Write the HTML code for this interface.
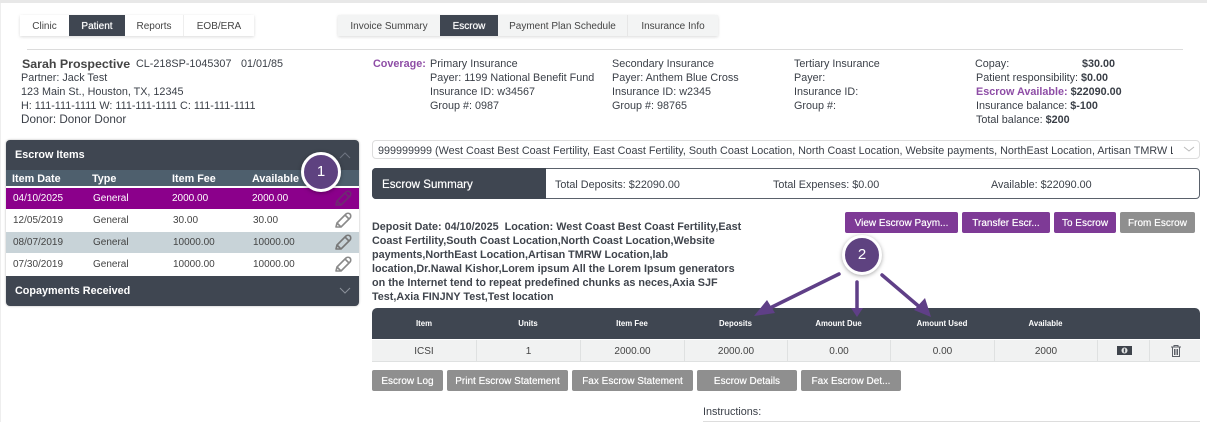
<!DOCTYPE html>
<html><head><meta charset="utf-8"><style>
html,body{margin:0;padding:0;background:#fff}
#p{position:relative;width:1207px;height:422px;overflow:hidden;background:#fff;font-family:"Liberation Sans",sans-serif;font-size:10.8px;color:#3a3f47;filter:blur(.35px)}
#p div{position:absolute;box-sizing:border-box;white-space:nowrap}
.t{line-height:16px}
.tab{top:15px;height:21px;line-height:23px;text-align:center;font-size:10px;color:#444}
.on{background:#3f4651;color:#fff;text-shadow:0 0 .6px #fff}
.rowc{font-size:10px;line-height:21px;height:21px;color:#444}
.hc{top:170px;height:16px;line-height:18px;font-size:10.8px;font-weight:bold;color:#fff}
.btn{height:21px;line-height:23px;text-align:center;color:#fff;font-size:10px;border-radius:2px;background:#8f8f8f;text-shadow:0 0 .5px #fff}
.pu{background:#7e3a96;top:212px}
.g{top:370px}
.th{top:308px;height:31px;line-height:31px;font-size:7.8px;font-weight:bold;color:#fff;text-align:center}
.td{top:340px;height:21px;line-height:23px;font-size:10px;text-align:center;color:#444;border-right:1px solid #dfe1e1}
.badge{width:40px;height:40px;border-radius:50%;background:#5e4280;border:3px solid #fff;box-shadow:0 1px 4px rgba(0,0,0,.35);color:#fff;text-align:center;line-height:34px;font-size:15px}
</style></head><body><div id="p">
<div style="left:0;top:0;width:1207px;height:3px;background:#e8e8e8"></div>
<div style="left:0;top:3px;width:1px;height:419px;background:#eee"></div>

<div style="left:20px;top:15px;width:234px;height:21px;background:#fff;box-shadow:0 1px 3px rgba(0,0,0,.15)"></div>
<div class="tab" style="left:20px;width:49px">Clinic</div>
<div class="tab on" style="left:69px;width:56px">Patient</div>
<div class="tab" style="left:125px;width:59px;border-right:1px solid #eee">Reports</div>
<div class="tab" style="left:184px;width:70px">EOB/ERA</div>

<div style="left:338px;top:15px;width:380px;height:21px;background:#f3f4f4;box-shadow:0 1px 3px rgba(0,0,0,.15)"></div>
<div class="tab" style="left:338px;width:102px">Invoice Summary</div>
<div class="tab on" style="left:440px;width:58px">Escrow</div>
<div class="tab" style="left:498px;width:130px;border-right:1px solid #e6e6e6">Payment Plan Schedule</div>
<div class="tab" style="left:628px;width:90px">Insurance Info</div>

<div style="left:27px;top:49px;width:1156px;height:1px;background:#dcdcdc"></div>

<div class="t" style="left:22px;top:56px;font-size:12.4px;font-weight:bold;color:#444">Sarah Prospective</div>
<div class="t" style="left:136px;top:56px">CL-218SP-1045307</div>
<div class="t" style="left:241px;top:56px">01/01/85</div>
<div class="t" style="left:21px;top:70px">Partner: Jack Test</div>
<div class="t" style="left:21px;top:84px">123 Main St., Houston, TX, 12345</div>
<div class="t" style="left:21px;top:98px">H: 111-111-1111 W: 111-111-1111 C: 111-111-1111</div>
<div class="t" style="left:21px;top:112px;font-size:11.7px">Donor: Donor Donor</div>

<div class="t" style="left:373px;top:56px;font-weight:bold;color:#8e4da6">Coverage:</div>
<div class="t" style="left:430px;top:56px">Primary Insurance</div>
<div class="t" style="left:430px;top:70px">Payer: 1199 National Benefit Fund</div>
<div class="t" style="left:430px;top:84px">Insurance ID: w34567</div>
<div class="t" style="left:430px;top:98px">Group #: 0987</div>

<div class="t" style="left:612px;top:56px">Secondary Insurance</div>
<div class="t" style="left:612px;top:70px">Payer: Anthem Blue Cross</div>
<div class="t" style="left:612px;top:84px">Insurance ID: w2345</div>
<div class="t" style="left:612px;top:98px">Group #: 98765</div>

<div class="t" style="left:794px;top:56px">Tertiary Insurance</div>
<div class="t" style="left:794px;top:70px">Payer:</div>
<div class="t" style="left:794px;top:84px">Insurance ID:</div>
<div class="t" style="left:794px;top:98px">Group #:</div>

<div class="t" style="left:975px;top:56px">Copay:</div>
<div class="t" style="left:1082px;top:56px;font-weight:bold">$30.00</div>
<div class="t" style="left:976px;top:70px">Patient responsibility: <b>$0.00</b></div>
<div class="t" style="left:976px;top:84px"><b style="color:#8e4da6">Escrow Available:</b> <b>$22090.00</b></div>
<div class="t" style="left:976px;top:98px">Insurance balance: <b>$-100</b></div>
<div class="t" style="left:976px;top:112px">Total balance: <b>$200</b></div>

<!-- left panel -->
<div style="left:6px;top:140px;width:353px;height:166px;background:#3f4651;border-radius:4px;box-shadow:0 0 2px rgba(0,0,0,.3)"></div>
<div style="left:15px;top:148px;line-height:15px;font-weight:bold;color:#fff">Escrow Items</div>
<div style="left:6px;top:170px;width:353px;height:16px;background:#4e5f6d"></div>
<div class="hc" style="left:12px">Item Date</div>
<div class="hc" style="left:92px">Type</div>
<div class="hc" style="left:172px">Item Fee</div>
<div class="hc" style="left:252px">Available</div>
<div style="left:6px;top:186px;width:353px;height:90px;background:#fff"></div>
<div style="left:6px;top:188px;width:353px;height:21px;background:#8b008b"></div>
<div style="left:6px;top:232px;width:353px;height:21px;background:#c8d3d8"></div>

<div class="rowc" style="left:13px;top:188px;color:#fff">04/10/2025</div><div class="rowc" style="left:93px;top:188px;color:#fff">General</div><div class="rowc" style="left:172px;top:188px;color:#fff">2000.00</div><div class="rowc" style="left:252px;top:188px;color:#fff">2000.00</div>
<div class="rowc" style="left:13px;top:210px">12/05/2019</div><div class="rowc" style="left:93px;top:210px">General</div><div class="rowc" style="left:173px;top:210px">30.00</div><div class="rowc" style="left:253px;top:210px">30.00</div>
<div class="rowc" style="left:13px;top:232px">08/07/2019</div><div class="rowc" style="left:93px;top:232px">General</div><div class="rowc" style="left:173px;top:232px">10000.00</div><div class="rowc" style="left:253px;top:232px">10000.00</div>
<div class="rowc" style="left:13px;top:254px">07/30/2019</div><div class="rowc" style="left:93px;top:254px">General</div><div class="rowc" style="left:173px;top:254px">10000.00</div><div class="rowc" style="left:253px;top:254px">10000.00</div>

<svg style="position:absolute;left:0;top:0" width="1207" height="422" fill="none">
<g stroke-width="1.6" stroke-linejoin="round">
<path d="M336 205l1-4 9-9c1-1 3-1 4 0s1 3 0 4l-9 9z M345 193l4 4 M337 201l4 4" stroke="#6f2a72"/>
<path d="M336 227l1-4 9-9c1-1 3-1 4 0s1 3 0 4l-9 9z M345 215l4 4 M337 223l4 4" stroke="#8a8a8a"/>
<path d="M336 249l1-4 9-9c1-1 3-1 4 0s1 3 0 4l-9 9z M345 237l4 4 M337 245l4 4" stroke="#777"/>
<path d="M336 271l1-4 9-9c1-1 3-1 4 0s1 3 0 4l-9 9z M345 259l4 4 M337 267l4 4" stroke="#8a8a8a"/>
</g>
<path d="M340 158l5-5 5 5" stroke="#6d7480" stroke-width="1"/>
<path d="M340 288l5 5 5-5" stroke="#8b919a" stroke-width="1"/>
</svg>
<div style="left:15px;top:284px;line-height:15px;font-weight:bold;color:#fff">Copayments Received</div>

<!-- select -->
<div style="left:372px;top:140px;width:828px;height:19px;border:1px solid #ddd;border-radius:4px;background:#fff"></div>
<div style="left:378px;top:144px;width:795px;line-height:14px;overflow:hidden">999999999 (West Coast Best Coast Fertility, East Coast Fertility, South Coast Location, North Coast Location, Website payments, NorthEast Location, Artisan TMRW Location, lab location</div>
<svg style="position:absolute;left:1183px;top:146px" width="12" height="8" fill="none"><path d="M1 1l5 4 5-4" stroke="#bbb"/></svg>

<!-- summary -->
<div style="left:372px;top:168px;width:828px;height:31px;border:1px solid #5a616b;border-radius:4px;background:#fff"></div>
<div style="left:372px;top:168px;width:174px;height:31px;background:#3f4651;border-radius:4px 0 0 4px;color:#fff;font-size:11.6px;line-height:33px;padding-left:10px;text-shadow:0 0 .5px #fff">Escrow Summary</div>
<div class="t" style="left:555px;top:177px">Total Deposits: $22090.00</div>
<div class="t" style="left:773px;top:177px">Total Expenses: $0.00</div>
<div class="t" style="left:991px;top:177px">Available: $22090.00</div>

<!-- deposit -->
<div style="left:372px;top:220px;line-height:14px;font-weight:bold;color:#3f444c">Deposit Date: 04/10/2025&nbsp; Location: West Coast Best Coast Fertility,East<br>Coast Fertility,South Coast Location,North Coast Location,Website<br>payments,NorthEast Location,Artisan TMRW Location,lab<br>location,Dr.Nawal Kishor,Lorem ipsum All the Lorem Ipsum generators<br>on the Internet tend to repeat predefined chunks as neces,Axia SJF<br>Test,Axia FINJNY Test,Test location</div>

<div class="btn pu" style="left:845px;width:113px">View Escrow Paym...</div>
<div class="btn pu" style="left:962px;width:88px">Transfer Escr...</div>
<div class="btn pu" style="left:1054px;width:62px">To Escrow</div>
<div class="btn" style="left:1120px;top:212px;width:75px">From Escrow</div>

<!-- table -->
<div style="left:372px;top:308px;width:828px;height:31px;background:#3f4651;border-radius:5px 5px 0 0"></div>
<div style="left:372px;top:340px;width:828px;height:22px;background:#f1f2f2;border-bottom:1px solid #dfe1e1"></div>
<div class="th" style="left:372px;width:104px">Item</div>
<div class="th" style="left:476px;width:104px">Units</div>
<div class="th" style="left:580px;width:104px">Item Fee</div>
<div class="th" style="left:684px;width:103px">Deposits</div>
<div class="th" style="left:787px;width:103px">Amount Due</div>
<div class="th" style="left:890px;width:104px">Amount Used</div>
<div class="th" style="left:994px;width:103px">Available</div>
<div class="td" style="left:372px;width:105px">ICSI</div>
<div class="td" style="left:477px;width:104px">1</div>
<div class="td" style="left:581px;width:104px">2000.00</div>
<div class="td" style="left:685px;width:103px">2000.00</div>
<div class="td" style="left:788px;width:103px">0.00</div>
<div class="td" style="left:891px;width:104px">0.00</div>
<div class="td" style="left:995px;width:103px">2000</div>
<div class="td" style="left:1098px;width:52px"></div>
<svg style="position:absolute;left:1117px;top:346px" width="15" height="10"><rect x="0" y="0" width="15" height="9" fill="#3f444c"/><circle cx="7.500" cy="4.500" r="3" fill="#e4e6e6"/><rect x="6.800" y="2.500" width="1.400" height="4" fill="#3f444c"/></svg>
<svg style="position:absolute;left:1170px;top:344px" width="12" height="14" fill="none" stroke="#5a5f66"><path d="M1 3h10M4 3V1.500h4V3M2.500 3.500v9h7v-9M4.500 5v6M6 5v6M7.500 5v6"/></svg>

<div class="btn g" style="left:372px;width:71px">Escrow Log</div>
<div class="btn g" style="left:447px;width:121px">Print Escrow Statement</div>
<div class="btn g" style="left:572px;width:121px">Fax Escrow Statement</div>
<div class="btn g" style="left:697px;width:100px">Escrow Details</div>
<div class="btn g" style="left:801px;width:100px">Fax Escrow Det...</div>

<div class="t" style="left:703px;top:404px">Instructions:</div>
<div style="left:703px;top:421px;width:497px;height:1px;background:#ddd"></div>

<!-- arrows -->
<svg style="position:absolute;left:0;top:0" width="1207" height="422" fill="none">
<g stroke="#5f3f87" stroke-width="3.500" stroke-linecap="round"><path d="M839 274L772 307"/><path d="M857 282V309"/><path d="M882 275L922 309"/></g>
<g fill="#5f3f87"><path d="M754 316L767 300 775 313z"/><path d="M851 308h12l-6 9z"/><path d="M931 317L914 310 925 298z"/></g>
</svg>
<div class="badge" style="left:301px;top:152px">1</div>
<div class="badge" style="left:842px;top:235px">2</div>
</div></body></html>
